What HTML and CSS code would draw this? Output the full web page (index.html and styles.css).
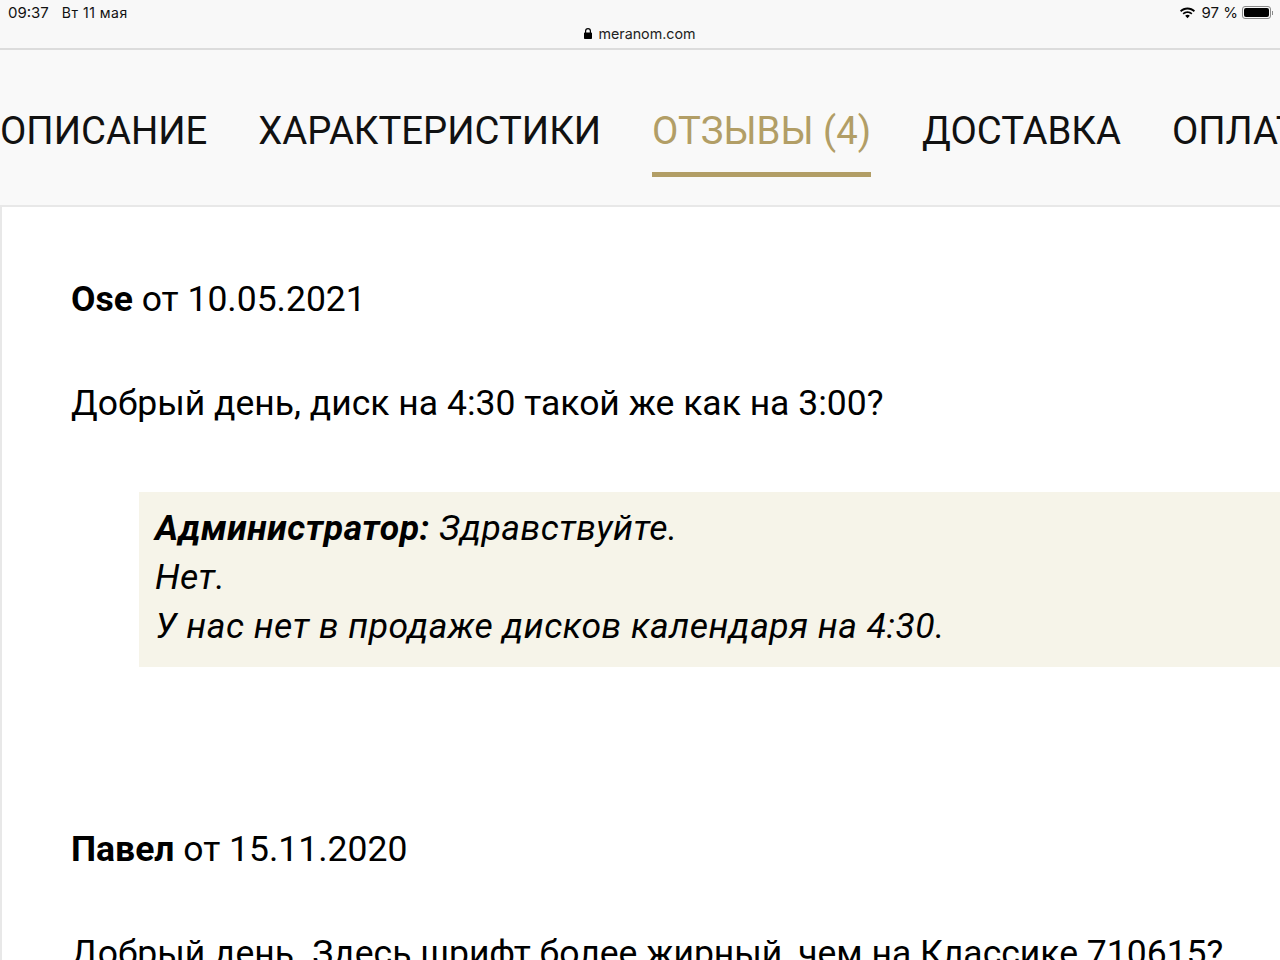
FILE: index.html
```html
<!DOCTYPE html>
<html lang="ru">
<head>
<meta charset="UTF-8">
<title>Отзывы</title>
<link rel="stylesheet" href="styles.css">
</head>
<body>

<header class="browser-bar">
    <div class="status-row">
        <div class="status-left">
            <span>09:37</span>
            <span>Вт 11 мая</span>
        </div>
        <div class="status-right">
            <svg class="wifi-icon" width="17" height="12" viewBox="0 0 17 12">
                <path d="M8.5 2.4c2.4 0 4.600 .9 6.300 2.500l1.200-1.300C14 1.700 11.400 .6 8.500 .6S3 1.700 1 3.600l1.200 1.300C3.900 3.300 6.100 2.400 8.500 2.400z"/>
                <path d="M8.500 6c1.400 0 2.700 .5 3.700 1.500l1.200-1.300C12.100 4.900 10.400 4.200 8.500 4.200S4.900 4.900 3.600 6.200l1.200 1.300C5.800 6.500 7.100 6 8.500 6z"/>
                <path d="M8.500 7.800c-.9 0-1.700 .3-2.300 .9l2.300 2.500 2.300-2.500c-.6-.6-1.400-.9-2.300-.9z"/>
            </svg>
            <span>97 %</span>
            <div class="battery"><div class="battery-fill"></div></div>
            <div class="battery-tip"></div>
        </div>
    </div>
    <div class="address-row">
        <svg class="lock-icon" width="8" height="11" viewBox="0 0 8 11">
            <path d="M1 4.500V3a3 3 0 0 1 6 0v1.500h.2c.5 0 .8 .3 .8 .8v4.900c0 .5-.3 .8-.8 .8H.8c-.5 0-.8-.3-.8-.8V5.300c0-.5 .3-.8 .8-.8zM2.200 4.500h3.600V3a1.800 1.800 0 0 0-3.600 0z"/>
        </svg>
        <span>meranom.com</span>
    </div>
</header>

<nav class="tabs">
    <a class="tab">ОПИСАНИЕ</a>
    <a class="tab">ХАРАКТЕРИСТИКИ</a>
    <a class="tab tab-active">ОТЗЫВЫ (4)</a>
    <a class="tab">ДОСТАВКА</a>
    <a class="tab">ОПЛАТА</a>
</nav>

<main class="panel">
    <article class="review">
        <p class="review-head"><b>Ose</b> от 10.05.2021</p>
        <p class="review-text">Добрый день, диск на 4:30 такой же как на 3:00?</p>
        <div class="answer">
            <b>Администратор:</b> Здравствуйте.<br>
            Нет.<br>
            У нас нет в продаже дисков календаря на 4:30.
        </div>
    </article>
    <article class="review">
        <p class="review-head"><b>Павел</b> от 15.11.2020</p>
        <p class="review-text">Добрый день. Здесь шрифт более жирный, чем на Классике 710615?</p>
    </article>
</main>

</body>
</html>
```

FILE: styles.css
```css
html, body {
    margin: 0;
    height: 960px;
    overflow: hidden;
}
body {
    background: #fff;
    color: #000;
    font-family: Roboto, "Liberation Sans", sans-serif;
}

/* top of the tablet screen */
.browser-bar {
    height: 50px;
    box-sizing: border-box;
    background: #f8f8f8;
    border-bottom: 2px solid #dcdcdc;
    font-family: Inter, Roboto, sans-serif;
}
.status-row {
    display: flex;
    justify-content: space-between;
    height: 24px;
    padding: 4px 7px 0 8px;
    box-sizing: border-box;
    font-size: 15px;
    line-height: 17px;
    color: #111;
}
.status-left {
    display: flex;
    gap: 13px;
}
.status-left span + span {
    font-size: 14px;
    letter-spacing: .5px;
}
.status-right {
    display: flex;
    align-items: center;
    height: 17px;
}
.wifi-icon {
    margin-right: 6px;
}
.battery {
    margin-left: 4px;
    width: 29px;
    height: 13px;
    padding: 1px;
    box-sizing: border-box;
    border: 1px solid #8a8a8a;
    border-radius: 3px;
}
.battery-fill {
    height: 100%;
    background: #000;
    border-radius: 2px;
}
.battery-tip {
    width: 1px;
    height: 4px;
    margin-left: 1px;
    background: #8a8a8a;
}
.address-row {
    display: flex;
    justify-content: center;
    align-items: center;
    gap: 6px;
    height: 19px;
    font-size: 14.3px;
    color: #222;
}

.tabs {
    display: flex;
    gap: 51px;
    height: 157px;
    padding-top: 55px;
    box-sizing: border-box;
    overflow: hidden;
    background: #f9f9f9;
    border-bottom: 2px solid #e8e8e8;
    white-space: nowrap;
}
.tab {
    flex: none;
    height: 72px;
    font-size: 38.3px;
    line-height: 52px;
    color: #111;
    box-sizing: border-box;
}
.tab-active {
    color: #b29e66;
    border-bottom: 5px solid #b29e66;
}

.panel {
    border-left: 2px solid #e8e8e8;
    padding: 68px 0 0 69px;
}
.review {
    margin-bottom: 158px;
}
.review p {
    margin: 0;
    font-size: 35.5px;
    line-height: 49px;
    white-space: nowrap;
}
.review-text {
    padding-top: 55px;
}
.answer {
    margin: 64px 0 0 68px;
    padding: 12px 16px;
    height: 175px;
    box-sizing: border-box;
    background: #f6f4e9;
    font-size: 35.5px;
    letter-spacing: .5px;
    line-height: 49px;
    font-style: italic;
    white-space: nowrap;
}
```
